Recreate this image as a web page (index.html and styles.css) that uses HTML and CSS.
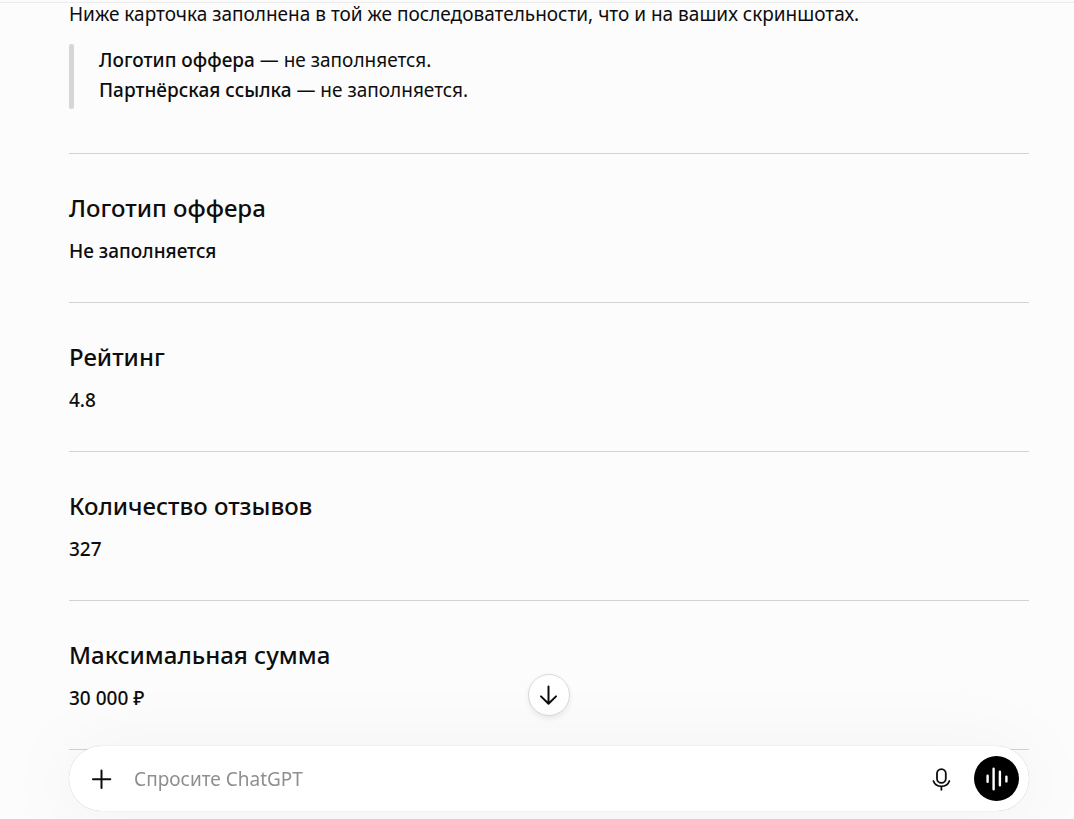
FILE: index.html
```html
<!DOCTYPE html>
<html lang="ru">
<head>
<meta charset="utf-8">
<meta name="viewport" content="width=device-width, initial-scale=1">
<title>ChatGPT</title>
<link rel="stylesheet" href="styles.css">
</head>
<body>
<main class="thread">
  <p class="intro">Ниже карточка заполнена в той же последовательности, что и на ваших скриншотах.</p>
  <blockquote class="quote">
    <strong>Логотип оффера</strong> — не заполняется.<br>
    <strong>Партнёрская ссылка</strong> — не заполняется.
  </blockquote>
  <section class="field"><h2>Логотип оффера</h2><p>Не заполняется</p></section>
  <section class="field"><h2>Рейтинг</h2><p>4.8</p></section>
  <section class="field"><h2>Количество отзывов</h2><p>327</p></section>
  <section class="field"><h2>Максимальная сумма</h2><p>30 000 ₽</p></section>
  <hr class="rule">
</main>
<div class="dock">
  <button class="scroll-down" type="button" aria-label="Прокрутить вниз">
    <svg width="22" height="22" viewBox="0 0 22 22"><path d="M10.5 2.5V19.8M3 12.4L10.5 19.8L18 12.4"/></svg>
  </button>
  <form class="composer">
    <button class="icon-button" type="button" aria-label="Добавить">
      <svg width="20" height="20" viewBox="0 0 20 20"><path d="M9.5 1.5V19M0.9 10.3H18.3"/></svg>
    </button>
    <input class="prompt" type="text" aria-label="Сообщение" placeholder="Спросите ChatGPT">
    <button class="icon-button" type="button" aria-label="Диктовка">
      <svg class="mic" width="20" height="24" viewBox="0 0 20 24"><rect x="5" y="2.2" width="8.8" height="13.6" rx="4.4"/><path d="M1.4 14C2.7 17.5 5.6 19.4 9.4 19.4S16.1 17.5 17.4 14M9.4 19.4V22.8"/></svg>
    </button>
    <button class="voice" type="button" aria-label="Голосовой режим">
      <svg class="wave" width="24" height="24" viewBox="0 0 24 24"><path d="M2.6 8.8V14.8M8.6 1.8V22.2M14.9 4.8V18.2M21.4 9.6V14.4"/></svg>
    </button>
  </form>
</div>
</body>
</html>
```
FILE: styles.css
```css
* {
  box-sizing: border-box;
}

body {
  margin: 0;
  height: 100vh;
  overflow: hidden;
  background: #fcfcfc;
  color: #0d0d0d;
  font-family: "Segoe UI", "Noto Sans", sans-serif;
  font-size: 19px;
  line-height: 30px;
}

button {
  display: grid;
  place-items: center;
  flex: none;
  padding: 0;
  border: 0;
  background: none;
  color: #0d0d0d;
}

svg {
  fill: none;
  stroke: currentColor;
  stroke-width: 2;
  stroke-linecap: round;
  stroke-linejoin: round;
}

.thread {
  margin-top: 2px;
  padding: 0 45px 0 69px;
  border-top: 1px solid #ececec;
}

.intro {
  margin: -4px 0 0;
}

.quote {
  position: relative;
  margin: 15px 0 44px;
  padding: 1px 0 4px 30px;
}

.quote::before {
  content: "";
  position: absolute;
  inset: 0 auto 0 0;
  width: 5px;
  border-radius: 2px;
  background: #d6d6d6;
}

strong {
  font-weight: 500;
}

.field {
  padding: 38px 0 36px;
  border-top: 1px solid #d2d2d2;
}

.field h2 {
  margin: 0 0 12px;
  font-size: 24px;
  font-weight: 500;
  line-height: 32px;
}

.field p {
  margin: 0;
  font-weight: 500;
}

.rule {
  margin: 0;
  border: 0;
  border-top: 1px solid #d2d2d2;
}

.dock {
  position: fixed;
  inset: auto 0 0;
  display: flex;
  flex-direction: column;
  align-items: center;
  gap: 30px;
  padding: 0 45px 8px 69px;
}

.scroll-down {
  width: 42px;
  height: 42px;
  border: 1px solid #d8d8d8;
  border-radius: 50%;
  background: #fff;
  box-shadow: 0 3px 6px rgba(0, 0, 0, 0.08);
}

.composer {
  display: flex;
  align-items: center;
  width: 100%;
  height: 65px;
  padding: 0 10px;
  border-radius: 33px;
  background: #fff;
  box-shadow: 0 0 1px rgba(0, 0, 0, 0.3), 0 5px 80px 8px rgba(0, 0, 0, 0.04);
}

.icon-button {
  width: 45px;
  height: 45px;
}

.mic {
  stroke-width: 1.8;
}

.wave {
  stroke-width: 2.4;
}

.prompt {
  flex: 1;
  min-width: 0;
  padding: 0 10px;
  border: 0;
  outline: 0;
  background: none;
  color: #0d0d0d;
  font: inherit;
}

.prompt::placeholder {
  color: #8f8f8f;
}

.voice {
  width: 45px;
  height: 45px;
  margin-left: 10px;
  border-radius: 50%;
  background: #000;
  color: #fff;
}
```
